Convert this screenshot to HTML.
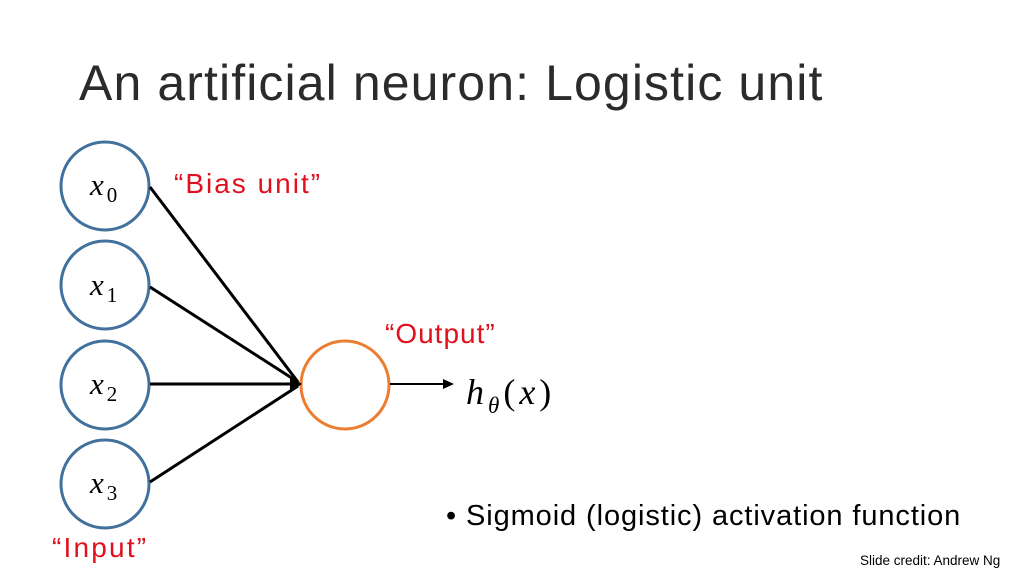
<!DOCTYPE html>
<html><head><meta charset="utf-8"><style>
body{margin:0;width:1024px;height:576px;background:#fff;overflow:hidden;position:relative;font-family:"Liberation Sans",sans-serif}
.t{position:absolute;white-space:nowrap}
</style></head><body>
<div class="t" style="left:79px;top:54px;font-size:50px;color:#2b2b2b;letter-spacing:1.1px">An artificial neuron: Logistic unit</div>
<svg width="1024" height="576" style="position:absolute;left:0;top:0">
<g fill="none" stroke="#41719c" stroke-width="3">
<circle cx="105" cy="186" r="44"/><circle cx="105" cy="285" r="44"/>
<circle cx="105" cy="385" r="44"/><circle cx="105" cy="484" r="44"/>
</g>
<circle cx="345" cy="385" r="44" fill="none" stroke="#ed7d31" stroke-width="3"/>
<g stroke="#000" stroke-width="3">
<line x1="150" y1="187" x2="298" y2="382"/>
<line x1="150" y1="287" x2="298" y2="382"/>
<line x1="150" y1="384" x2="298" y2="384"/>
<line x1="150" y1="482" x2="298" y2="386"/>
<line x1="390" y1="384" x2="445" y2="384" stroke-width="2"/>
</g>
<polygon points="290,376 302,384 290,392" fill="#000"/>
<polygon points="443,379 454,384 443,389" fill="#000"/>
<g font-family="Liberation Serif,serif" font-style="italic" font-size="31" fill="#000">
<text x="90" y="195">x<tspan font-size="21" font-style="normal" dx="3" dy="7">0</tspan></text>
<text x="90" y="295">x<tspan font-size="21" font-style="normal" dx="3" dy="7">1</tspan></text>
<text x="90" y="394">x<tspan font-size="21" font-style="normal" dx="3" dy="7">2</tspan></text>
<text x="90" y="493">x<tspan font-size="21" font-style="normal" dx="3" dy="7">3</tspan></text>
<text x="466" y="404" font-size="36" letter-spacing="4">h<tspan font-size="23" dy="9">θ</tspan><tspan font-style="normal" dy="-9">(</tspan>x<tspan font-style="normal">)</tspan></text>
</g>
</svg>
<div class="t" style="left:174px;top:168px;font-size:28px;color:#e0101e;letter-spacing:2px">“Bias unit”</div>
<div class="t" style="left:385px;top:318px;font-size:28px;color:#e0101e;letter-spacing:1px">“Output”</div>
<div class="t" style="left:52px;top:532px;font-size:28px;color:#e0101e;letter-spacing:2.2px">“Input”</div>
<div class="t" style="left:446px;top:500px;font-size:29px;color:#000;letter-spacing:0.9px">• Sigmoid (logistic) activation function</div>
<div class="t" style="left:860px;top:553px;font-size:13.5px;color:#000">Slide credit: Andrew Ng</div>
</body></html>
